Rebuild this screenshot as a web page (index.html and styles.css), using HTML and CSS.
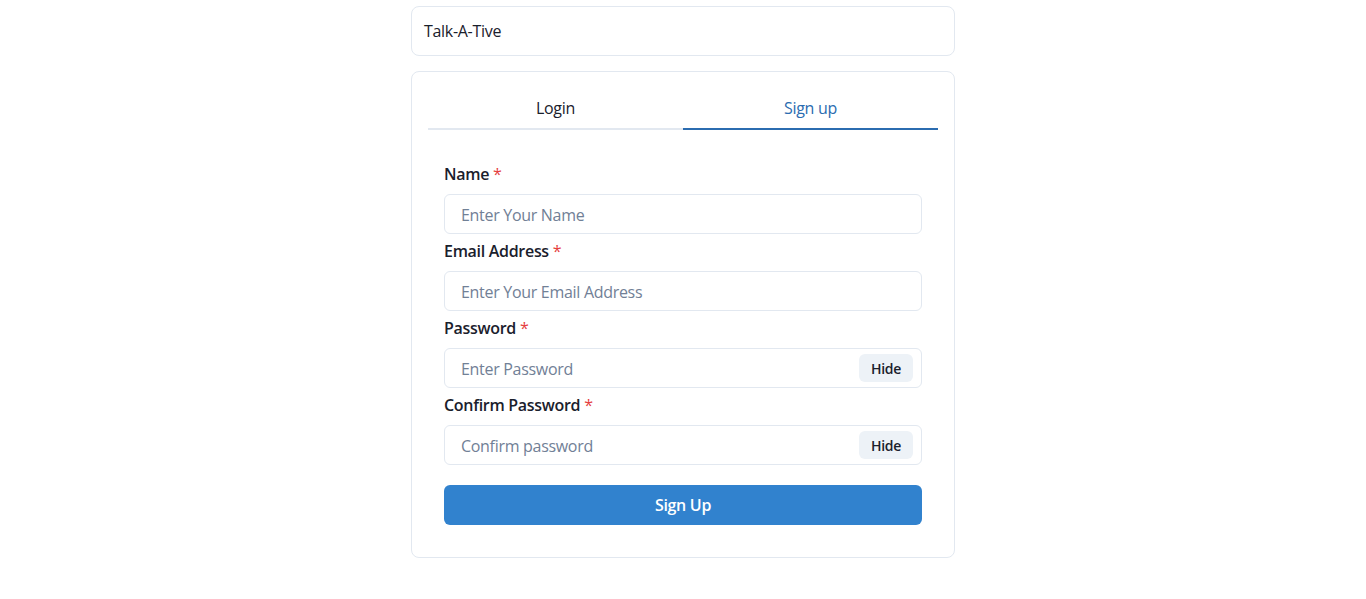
FILE: index.html
```html
<!DOCTYPE html>
<html lang="en">
<head>
<meta charset="utf-8">
<title>Talk-A-Tive</title>
<link rel="stylesheet" href="styles.css">
</head>
<body>
<div class="container">
  <div class="header">Talk-A-Tive</div>
  <div class="card">
    <div class="tablist">
      <button class="tab">Login</button>
      <button class="tab tab-selected">Sign up</button>
    </div>
    <div class="panel">
      <div class="field">
        <label class="label">Name<span class="req">*</span></label>
        <div class="input-group"><input class="input" placeholder="Enter Your Name"></div>
      </div>
      <div class="field">
        <label class="label">Email Address<span class="req">*</span></label>
        <div class="input-group"><input class="input" placeholder="Enter Your Email Address"></div>
      </div>
      <div class="field">
        <label class="label">Password<span class="req">*</span></label>
        <div class="input-group"><input class="input input-pr" type="password" placeholder="Enter Password"><div class="right-el"><button class="hide-btn">Hide</button></div></div>
      </div>
      <div class="field">
        <label class="label">Confirm Password<span class="req">*</span></label>
        <div class="input-group"><input class="input input-pr" type="password" placeholder="Confirm password"><div class="right-el"><button class="hide-btn">Hide</button></div></div>
      </div>
      <button class="submit">Sign Up</button>
    </div>
  </div>
</div>
</body>
</html>
```

FILE: styles.css
```css
* { box-sizing: border-box; }
html, body { margin: 0; padding: 0; background: #fff; }
body {
  font-family: "Open Sans", "Noto Sans", sans-serif;
  font-size: 16px;
  line-height: 1.5;
  color: #1A202C;
  letter-spacing: -0.3px;
}
.container {
  max-width: 576px;
  margin: 0 auto;
  padding: 6px 16px 0;
  display: flex;
  flex-direction: column;
}
.header {
  padding: 12px;
  border: 1px solid #E2E8F0;
  border-radius: 8px;
  margin-bottom: 15px;
}
.card {
  padding: 16px;
  border: 1px solid #E2E8F0;
  border-radius: 8px;
}
.tablist {
  display: flex;
  border-bottom: 2px solid #E2E8F0;
  margin-bottom: 16px;
}
.tab {
  flex: 1;
  font: inherit;
  letter-spacing: inherit;
  color: #1A202C;
  background: none;
  border: 0;
  border-bottom: 2px solid transparent;
  margin-bottom: -2px;
  padding: 8px 16px;
  cursor: pointer;
}
.tab-selected {
  color: #2B6CB0;
  border-bottom-color: #2B6CB0;
}
.panel {
  padding: 16px;
  display: flex;
  flex-direction: column;
  gap: 5px;
}
.label {
  display: block;
  font-weight: 600;
  margin-bottom: 8px;
  height: 24px;
}
.req { color: #E53E3E; margin-left: 4px; font-weight: 500; }
.input-group { position: relative; }
.input {
  width: 100%;
  height: 40px;
  padding: 2px 16px 0;
  font: inherit;
  letter-spacing: inherit;
  color: #1A202C;
  border: 1px solid #E2E8F0;
  border-radius: 6px;
  outline: none;
  background: #fff;
}
.input-pr { padding-right: 72px; }
.input::placeholder { color: #718096; opacity: 1; }
.right-el {
  position: absolute;
  top: 0;
  right: 0;
  width: 72px;
  height: 40px;
  display: flex;
  align-items: center;
  justify-content: center;
}
.hide-btn {
  height: 28px;
  padding: 0 12px;
  font-family: inherit;
  font-size: 14px;
  font-weight: 600;
  letter-spacing: inherit;
  color: #1A202C;
  background: #EDF2F7;
  border: 0;
  border-radius: 6px;
}
.submit {
  margin-top: 15px;
  height: 40px;
  width: 100%;
  font-family: inherit;
  font-size: 16px;
  font-weight: 600;
  letter-spacing: inherit;
  color: #fff;
  background: #3182CE;
  border: 0;
  border-radius: 6px;
}
```
